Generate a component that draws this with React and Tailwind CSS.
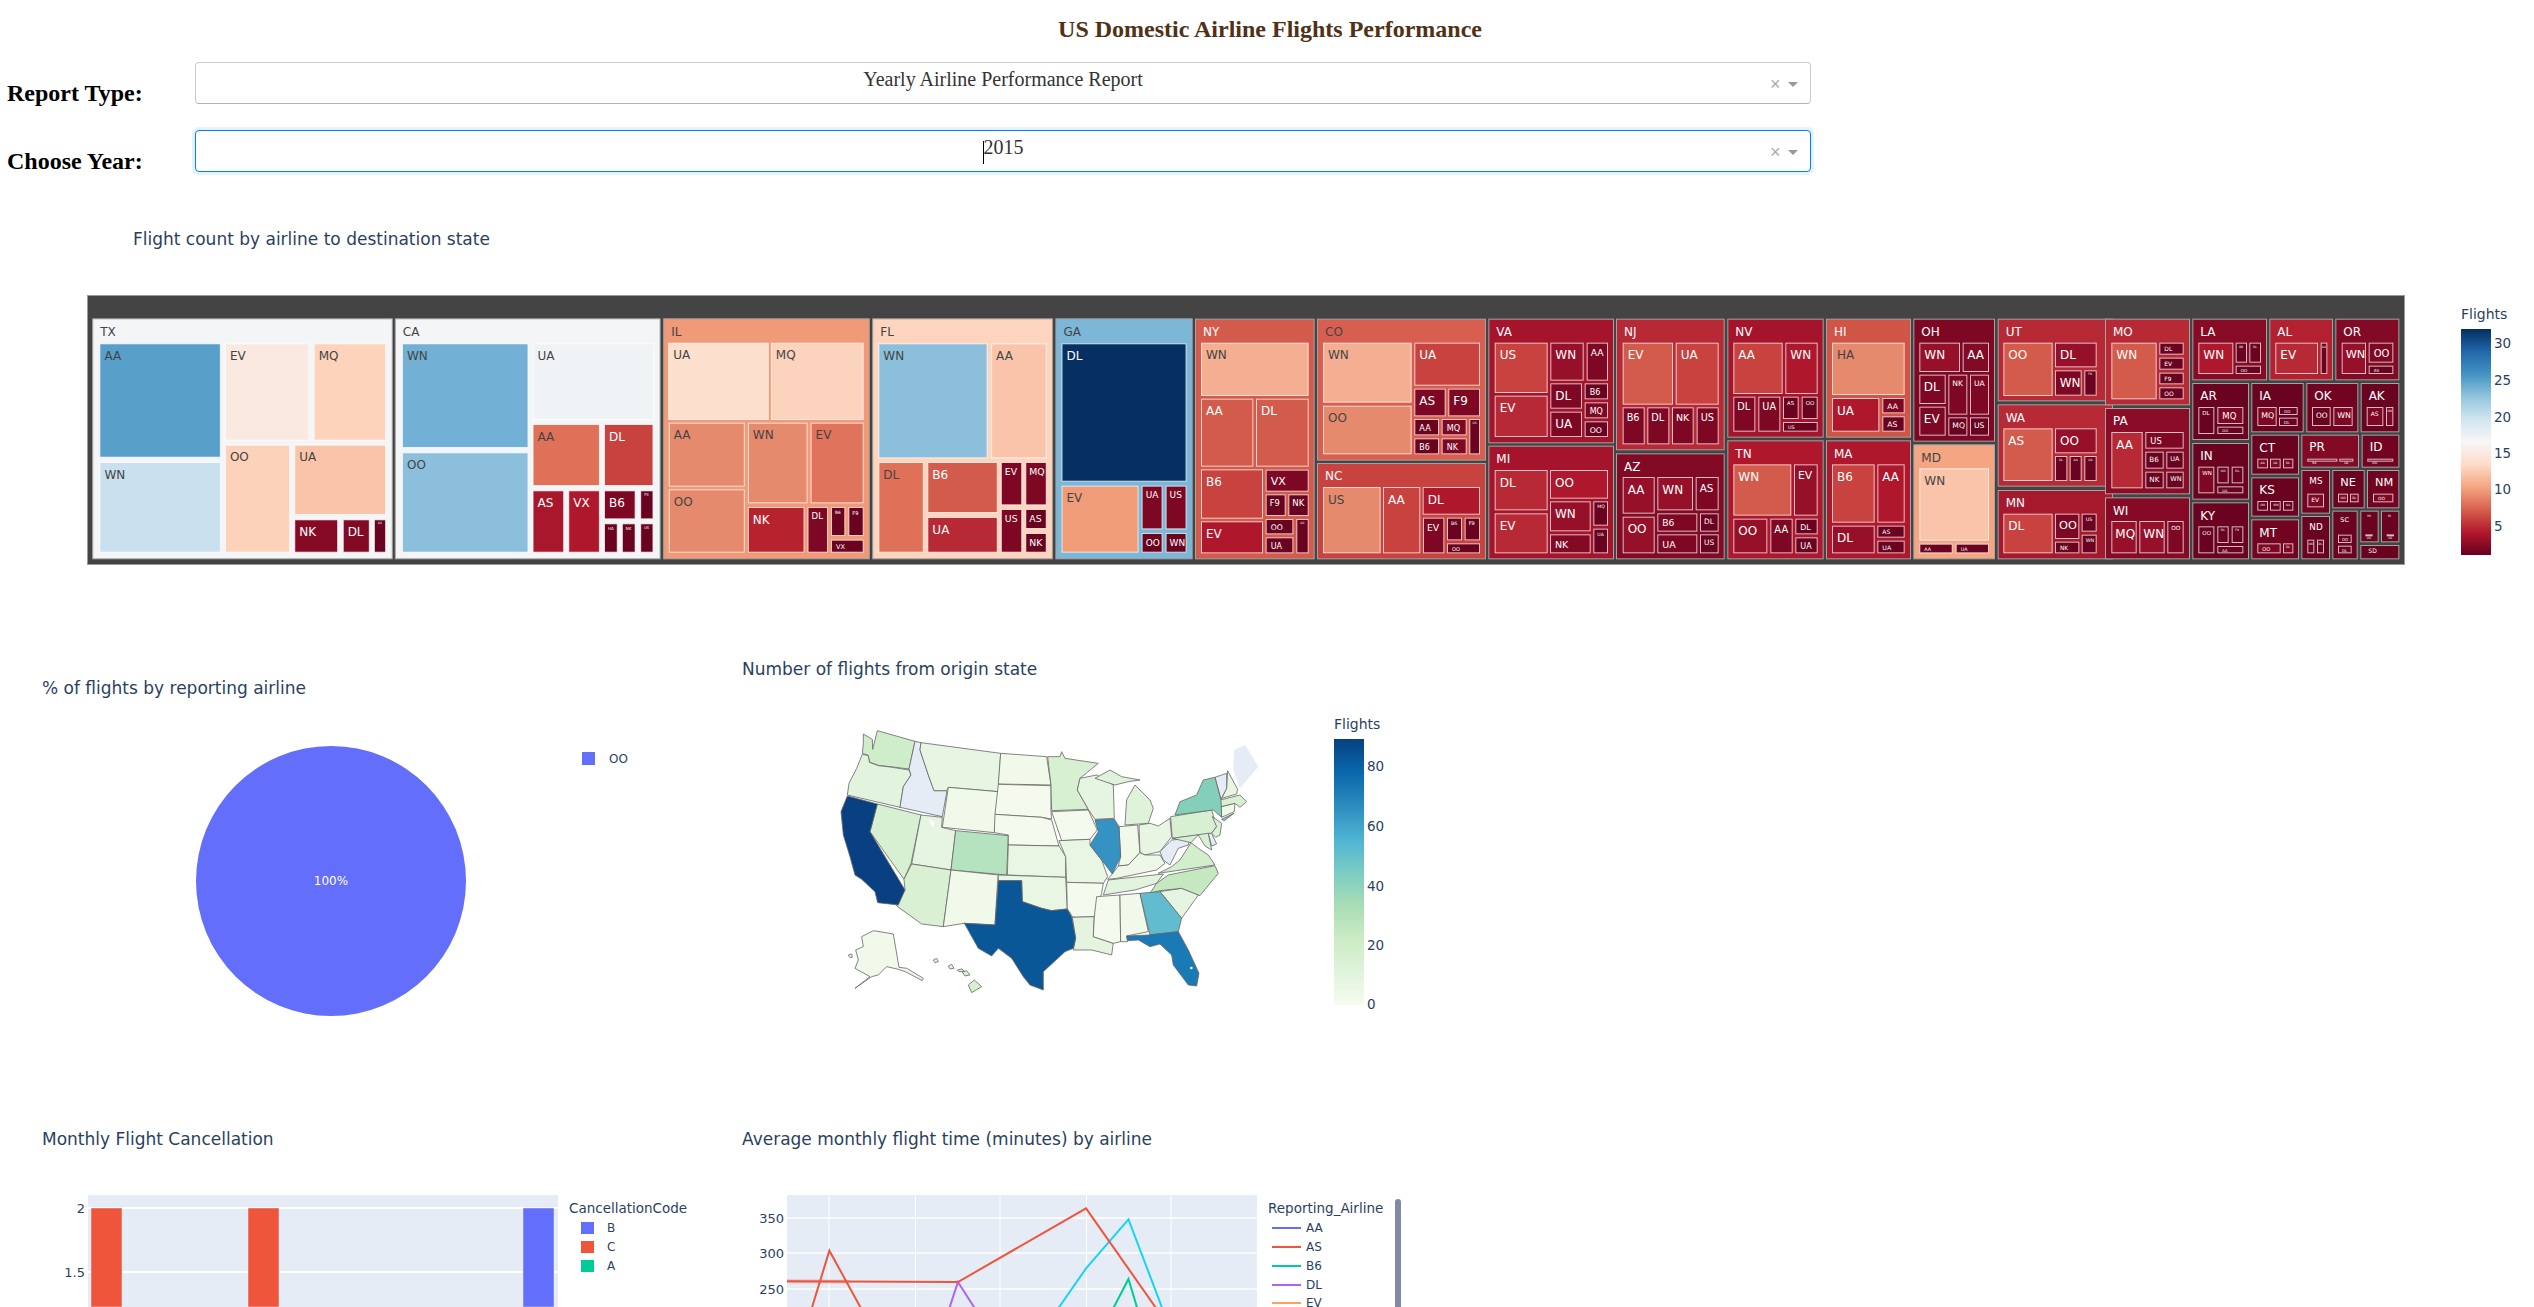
import React from 'react';

const C = '#2a3f5f';
const DK = '#6a0320';
const D2 = '#7e0823';
const D3 = '#96102a';
const R1 = '#ae172c';
const R2 = '#b72a35';
const R3 = '#c8423f';
const R4 = '#d35b4c';
const R5 = '#e68a6e';

// crops the boxes were measured on: x offset, x scale
const A = [80, 1.96];
const B = [860, 1.96];
const E8 = [1190, 3];
const E9 = [1620, 3];
const E10 = [2050, 3];

const box = (crop, oy, x0, x1, y0, y1) => ({
  x: crop[0] + x0 / crop[1],
  y: oy + y0 / 3,
  w: (x1 - x0) / crop[1],
  h: (y1 - y0) / 3,
});

// [label, crop, x0, x1, y0, y1, fill, children]
const states = [
  ['TX', A, 24, 613, 85, 808, '#f4f5f7', [
    ['AA', 38, 276, 160, 503, '#589fc9'], ['WN', 38, 276, 516, 788, '#c9e0ee'], ['EV', 284, 450, 160, 452, '#f9e9e0'],
    ['MQ', 458, 600, 160, 452, '#fdd3bc'], ['OO', 284, 412, 464, 788, '#fdd2bb'], ['UA', 420, 600, 464, 675, '#f9c4a9'],
    ['NK', 420, 506, 688, 788, '#870a24'], ['DL', 515, 568, 688, 788, '#820a24'], ['AS', 576, 600, 688, 788, DK],
  ]],
  ['CA', A, 617, 1138, 85, 808, '#f4f5f7', [
    ['WN', 631, 879, 160, 474, '#72b0d5'], ['OO', 631, 879, 487, 788, '#8bbfdc'], ['UA', 887, 1125, 160, 390, '#f0f3f6'],
    ['AA', 887, 1019, 402, 588, '#e07159'], ['DL', 1027, 1124, 402, 588, R3], ['AS', 887, 949, 601, 788, '#a9172c'],
    ['VX', 957, 1019, 601, 788, R1], ['B6', 1027, 1089, 601, 688, D2], ['F9', 1098, 1124, 601, 688, DK],
    ['HA', 1027, 1054, 700, 788, DK], ['NK', 1062, 1089, 700, 788, DK], ['US', 1098, 1124, 700, 788, DK],
  ]],
  ['IL', A, 1143, 1548, 85, 808, '#f09a78', [
    ['UA', 1153, 1350, 158, 390, '#fcdfcd'], ['MQ', 1354, 1536, 158, 390, '#fcd3bc'], ['AA', 1154, 1303, 398, 590, R5],
    ['OO', 1154, 1303, 598, 788, R5], ['WN', 1309, 1426, 398, 640, R5], ['EV', 1432, 1536, 398, 640, '#e0735b'],
    ['NK', 1309, 1420, 651, 788, '#b7222f'], ['DL', 1426, 1466, 651, 788, D2], ['B6', 1472, 1500, 651, 738, DK],
    ['F9', 1506, 1536, 651, 738, DK], ['VX', 1472, 1536, 749, 788, DK],
  ]],
  ['FL', B, 24, 378, 85, 808, '#fdd5bf', [
    ['WN', 36, 250, 160, 505, '#8bbfdc'], ['AA', 257, 366, 160, 505, '#f9c4a9'], ['DL', 36, 125, 516, 788, '#e07159'],
    ['B6', 132, 270, 516, 669, R4], ['UA', 132, 270, 681, 788, R2], ['EV', 276, 318, 516, 646, D2],
    ['MQ', 324, 366, 516, 646, D2], ['US', 276, 318, 657, 788, D2], ['AS', 324, 366, 657, 717, DK], ['NK', 324, 366, 729, 788, DK],
  ]],
  ['GA', B, 383, 652, 85, 808, '#7db7d8', [
    ['DL', 395, 640, 160, 575, '#053061'], ['EV', 395, 546, 587, 788, '#f19c79'], ['UA', 552, 593, 587, 718, D2],
    ['US', 599, 640, 587, 718, D2], ['OO', 552, 593, 729, 788, DK], ['WN', 599, 640, 729, 788, DK],
  ]],
  ['NY', E8, 15, 374, 56, 778, R4, [
    ['WN', 33, 356, 128, 288, '#f4ae91'], ['AA', 33, 190, 296, 500, R4], ['DL', 198, 356, 296, 500, R4],
    ['B6', 33, 219, 508, 656, R3], ['EV', 33, 219, 664, 760, R1], ['VX', 227, 356, 509, 575, D2],
    ['F9', 227, 287, 583, 648, DK], ['NK', 295, 356, 583, 648, DK], ['OO', 227, 310, 657, 703, DK],
    ['UA', 227, 310, 712, 760, DK], ['AS', 319, 356, 657, 760, DK],
  ]],
  ['CO', E8, 381, 888, 56, 482, '#d85f50', [
    ['WN', 399, 665, 128, 308, '#f4ae91'], ['OO', 399, 665, 317, 463, R5], ['UA', 673, 870, 128, 257, R3],
    ['AS', 673, 767, 266, 349, D2], ['F9', 775, 870, 266, 349, D2], ['AA', 673, 747, 357, 406, DK],
    ['MQ', 755, 830, 357, 406, D2], ['B6', 673, 747, 415, 463, DK], ['NK', 755, 830, 415, 463, D2], ['US', 838, 870, 357, 463, DK],
  ]],
  ['NC', E8, 381, 888, 489, 778, R3, [
    ['US', 399, 572, 561, 760, R5], ['AA', 579, 691, 561, 760, R3], ['DL', 698, 870, 561, 644, R1],
    ['EV', 699, 763, 653, 760, D2], ['B6', 771, 816, 653, 721, DK], ['F9', 824, 870, 653, 721, DK], ['OO', 771, 870, 730, 760, DK],
  ]],
  ['VA', E8, 895, 1272, 56, 430, '#a6142b', [
    ['US', 914, 1073, 128, 279, R3], ['EV', 914, 1073, 287, 411, R2], ['WN', 1081, 1181, 128, 242, D3],
    ['AA', 1190, 1254, 128, 242, D2], ['DL', 1081, 1176, 250, 326, D2], ['UA', 1081, 1176, 335, 411, D2],
    ['B6', 1184, 1254, 250, 298, DK], ['MQ', 1184, 1254, 307, 355, D2], ['OO', 1184, 1254, 364, 411, DK],
  ]],
  ['MI', E8, 895, 1272, 437, 778, '#a6142b', [
    ['DL', 914, 1073, 510, 631, R2], ['EV', 914, 1073, 640, 760, R2], ['OO', 1080, 1254, 510, 596, R1],
    ['WN', 1080, 1202, 604, 694, D3], ['NK', 1080, 1202, 703, 760, '#820a24'], ['MQ', 1210, 1254, 604, 677, DK], ['UA', 1210, 1254, 686, 760, DK],
  ]],
  ['NJ', E9, -12, 314, 56, 451, R2, [
    ['EV', 8, 159, 128, 314, R4], ['UA', 167, 296, 128, 314, R3], ['B6', 8, 74, 322, 433, D2],
    ['DL', 82, 148, 322, 433, D2], ['NK', 156, 221, 322, 433, D2], ['US', 230, 296, 322, 433, D2],
  ]],
  ['AZ', E9, -12, 314, 460, 778, '#820a24', [
    ['AA', 8, 104, 531, 641, D3], ['OO', 8, 104, 650, 760, D3], ['WN', 112, 219, 531, 631, D3], ['AS', 227, 296, 531, 631, D2],
    ['B6', 112, 232, 640, 695, D2], ['UA', 112, 232, 703, 760, D2], ['DL', 240, 296, 640, 695, DK], ['US', 240, 296, 703, 760, DK],
  ]],
  ['NV', E9, 322, 611, 56, 413, '#a6142b', [
    ['AA', 340, 488, 128, 282, R3], ['WN', 496, 593, 128, 282, R1], ['DL', 340, 406, 290, 395, D2], ['UA', 415, 481, 290, 395, D2],
    ['AS', 489, 536, 290, 357, DK], ['OO', 545, 593, 290, 357, DK], ['US', 489, 593, 366, 395, DK],
  ]],
  ['TN', E9, 322, 611, 421, 778, R1, [
    ['WN', 340, 514, 493, 647, R4], ['EV', 522, 593, 493, 647, D3], ['OO', 340, 442, 656, 760, D3],
    ['AA', 451, 518, 656, 760, D2], ['DL', 526, 593, 656, 703, DK], ['UA', 526, 593, 712, 760, DK],
  ]],
  ['HI', E9, 618, 873, 56, 413, '#d05546', [
    ['HA', 636, 854, 128, 285, R5], ['UA', 636, 778, 294, 395, R1], ['AA', 787, 854, 294, 340, D2], ['AS', 787, 854, 349, 395, DK],
  ]],
  ['MA', E9, 618, 873, 421, 778, R1, [
    ['B6', 636, 764, 493, 668, R3], ['AA', 772, 854, 493, 668, R1], ['DL', 636, 764, 677, 760, D3],
    ['AS', 772, 854, 677, 713, DK], ['UA', 772, 854, 722, 760, DK],
  ]],
  ['OH', E9, 880, 1125, 56, 425, D2, [
    ['WN', 898, 1020, 128, 216, D3], ['AA', 1028, 1107, 128, 216, '#820a24'], ['DL', 898, 977, 224, 312, D2], ['EV', 898, 977, 320, 407, D2],
    ['NK', 985, 1042, 224, 344, D2], ['UA', 1050, 1107, 224, 344, D2], ['MQ', 985, 1042, 352, 407, DK], ['US', 1050, 1107, 352, 407, DK],
  ]],
  ['MD', E9, 880, 1125, 433, 778, '#f4a582', [
    ['WN', 898, 1107, 505, 722, '#f9c4a9'], ['AA', 898, 998, 731, 760, DK], ['UA', 1007, 1107, 731, 760, DK],
  ]],
  ['UT', E9, 1133, 1479, 56, 304, R2, [
    ['OO', 1150, 1298, 128, 288, R4], ['DL', 1305, 1430, 128, 202, D3], ['WN', 1305, 1385, 211, 287, D2], ['F9', 1393, 1430, 211, 287, DK],
  ]],
  ['WA', E9, 1133, 1479, 313, 560, R2, [
    ['AS', 1150, 1298, 385, 543, R4], ['OO', 1305, 1430, 385, 460, D3], ['DL', 1305, 1342, 468, 543, DK],
    ['AA', 1349, 1385, 468, 543, DK], ['UA', 1393, 1430, 468, 543, DK],
  ]],
  ['MN', E9, 1133, 1479, 570, 778, '#a6182b', [
    ['DL', 1150, 1298, 641, 760, R3], ['OO', 1305, 1378, 641, 717, D2], ['NK', 1305, 1378, 725, 760, DK],
    ['US', 1385, 1430, 641, 695, DK], ['WN', 1385, 1430, 704, 760, DK],
  ]],
  ['MO', E10, 165, 420, 56, 316, R2, [
    ['WN', 184, 320, 128, 298, R4], ['DL', 328, 401, 128, 164, DK], ['EV', 328, 401, 173, 209, DK],
    ['F9', 328, 401, 218, 253, DK], ['OO', 328, 401, 262, 298, DK],
  ]],
  ['PA', E10, 165, 420, 324, 583, '#8b0c26', [
    ['AA', 184, 278, 396, 565, R2], ['US', 286, 401, 396, 446, D2], ['B6', 286, 341, 455, 506, DK],
    ['UA', 349, 401, 455, 506, DK], ['NK', 286, 341, 515, 565, DK], ['WN', 349, 401, 515, 565, DK],
  ]],
  ['WI', E10, 165, 420, 592, 778, '#860a25', [
    ['MQ', 184, 260, 663, 760, D3], ['WN', 268, 344, 663, 760, D3], ['OO', 352, 401, 663, 760, D2],
  ]],
  ['LA', E10, 427, 651, 56, 241, '#870b25', [
    ['WN', 445, 550, 128, 222, R1], ['B6', 557, 591, 128, 188, DK], ['DL', 598, 633, 128, 188, DK], ['OO', 557, 633, 197, 222, DK],
  ]],
  ['AL', E10, 658, 849, 56, 241, '#b3202f', [['EV', 676, 804, 128, 222, R2], ['AA', 812, 832, 128, 222, DK]]],
  ['OR', E10, 856, 1048, 56, 241, '#820a24', [
    ['WN', 875, 948, 128, 222, D3], ['OO', 956, 1030, 128, 188, D2], ['AS', 956, 1030, 197, 222, DK],
  ]],
  ['AR', E10, 427, 597, 249, 420, DK, [['DL', 445, 493, 321, 402, DK], ['MQ', 502, 580, 321, 372, D2], ['OO', 502, 580, 380, 402, DK]]],
  ['IN', E10, 427, 597, 429, 599, DK, [
    ['WN', 445, 493, 500, 580, D2], ['OO', 502, 536, 500, 550, DK], ['DL', 545, 580, 500, 550, DK], ['UA', 502, 580, 559, 580, DK],
  ]],
  ['KY', E10, 427, 597, 607, 778, DK, [
    ['OO', 445, 493, 679, 760, DK], ['DL', 502, 536, 679, 729, DK], ['F9', 545, 580, 679, 729, DK], ['AA', 502, 580, 738, 760, DK],
  ]],
  ['IA', E10, 604, 761, 249, 397, DK, [['MQ', 622, 680, 321, 378, D2], ['OO', 687, 743, 321, 345, DK], ['DL', 687, 743, 353, 378, DK]]],
  ['OK', E10, 769, 925, 249, 397, '#720421', [['OO', 786, 842, 321, 378, DK], ['WN', 850, 908, 321, 378, D2]]],
  ['AK', E10, 932, 1048, 249, 397, DK, [['AS', 950, 1000, 321, 378, D2], ['OO', 1008, 1030, 321, 378, D2]]],
  ['CT', E10, 604, 747, 404, 524, DK, [['AA', 622, 654, 476, 505, D2], ['UA', 660, 692, 476, 505, D2], ['DL', 699, 730, 476, 505, D2]]],
  ['KS', E10, 604, 747, 532, 650, DK, [['OO', 622, 654, 603, 632, DK], ['WN', 660, 692, 603, 632, DK], ['AA', 699, 730, 603, 632, DK]]],
  ['MT', E10, 604, 747, 658, 778, '#720421', [['OO', 622, 692, 730, 760, D2], ['DL', 699, 730, 730, 760, D2]]],
  ['PR', E10, 754, 927, 404, 503, '#820a24', [['B6', 772, 862, 476, 485, D2], ['UA', 868, 910, 476, 485, D2]]],
  ['ID', E10, 935, 1048, 404, 503, '#720421', [['OO', 952, 1030, 476, 485, D2]]],
  ['MS', E10, 754, 840, 510, 641, '#720421', [['EV', 772, 822, 581, 622, D2]]],
  ['ND', E10, 754, 840, 648, 778, DK, [['OO', 772, 793, 719, 760, DK], ['DL', 801, 822, 719, 760, DK]]],
  ['NE', E10, 847, 944, 510, 625, DK, [['OO', 864, 894, 581, 607, D2], ['DL', 900, 926, 581, 607, D2]]],
  ['NM', E10, 951, 1048, 510, 625, '#720421', [['OO', 969, 1030, 581, 607, D2]]],
  ['SC', E10, 847, 923, 632, 778, DK, [['OO', 864, 905, 704, 729, DK], ['DL', 864, 905, 737, 760, DK]]],
  ['MI', E10, 931, 986, 632, 727, DK, [['US', 946, 968, 703, 709, D2]]],
  ['RI', E10, 993, 1048, 632, 727, DK, [['US', 1010, 1032, 703, 709, D2]]],
  ['SD', E10, 931, 1048, 735, 778, DK, []],
];

const luma = (hex) => {
  const n = parseInt(hex.slice(1), 16);
  return 0.299 * (n >> 16) + 0.587 * ((n >> 8) & 255) + 0.114 * (n & 255);
};

// small text is shrunk to fit its cell, the way the chart lib does
function Cell({ label, r, fill, parent }) {
  const tw1 = label.length * 0.72;
  const fs = parent
    ? Math.max(3, Math.min(12, (r.w - 16) / tw1, r.h * 0.42))
    : Math.max(3, Math.min(12, (r.w - 8) / tw1, r.h * 0.5));
  const tw = tw1 * fs;
  const tx = parent ? Math.min(8, (r.w - tw) / 2) : Math.min(5, (r.w - tw) / 2);
  const ty = parent ? fs * 1.1 + Math.min(4, r.h * 0.1) : fs * 1.3 + 1;
  return (
    <g>
      <rect
        x={r.x + 0.5}
        y={r.y + 0.5}
        width={r.w - 1}
        height={r.h - 1}
        fill={fill}
        stroke={parent ? '#a3a3a3' : '#ffffff'}
        strokeOpacity={parent ? 1 : 0.72}
      />
      <text x={r.x + tx} y={r.y + ty} fontSize={fs} fill={luma(fill) > 127 ? '#444444' : '#ffffff'}>{label}</text>
    </g>
  );
}

function Treemap() {
  return (
    <svg viewBox="0 200 2534 420" className="block w-[2534px] h-[420px] font-['DejaVu_Sans',sans-serif]">
      <defs>
        <linearGradient id="rdbu" x1="0" y1="0" x2="0" y2="1">
          {['#053061', '#2166ac', '#4393c3', '#92c5de', '#d1e5f0', '#f7f7f7', '#fddbc7', '#f4a582', '#d6604d', '#b2182b', '#67001f'].map((c, i) => (
            <stop key={c} offset={i / 10} stopColor={c} />
          ))}
        </linearGradient>
      </defs>
      <text x="133" y="245" fontSize="17" fill={C}>Flight count by airline to destination state</text>
      <rect x="87.5" y="295.5" width="2317" height="269" fill="#444444" stroke="#999999" />
      {states.map(([label, crop, x0, x1, y0, y1, fill, kids]) => {
        const oy = crop === A || crop === B ? 290 : 300;
        return (
          <g key={label + x0 + y0}>
            <Cell parent label={label} fill={fill} r={box(crop, oy, x0, x1, y0, y1)} />
            {kids.map(([l, a, b, c, d, f]) => (
              <Cell key={l + a + c} label={l} fill={f} r={box(crop, oy, a, b, c, d)} />
            ))}
          </g>
        );
      })}
      <text x="2461" y="319" fontSize="14" fill={C}>Flights</text>
      <rect x="2461" y="329" width="30" height="226" fill="url(#rdbu)" />
      {[[30, 343], [25, 380], [20, 417], [15, 453], [10, 489], [5, 526]].map(([v, y]) => (
        <text key={v} x="2494" y={y + 5} fontSize="13.5" fill={C}>{v}</text>
      ))}
    </svg>
  );
}

const usa = [
  ['#d0edca', '85,42 112,58 113,88 127,32 240,64 222,147 165,140 130,136 103,126 100,106 82,100 85,70'],
  ['#e2f4de', '82,103 100,107 103,127 130,137 165,141 222,150 228,165 205,200 195,262 37,225 42,190 65,145'],
  ['#d8f0d2', '127,252 258,285 228,430 207,478 105,335'],
  ['#e5ecf6', '240,64 258,68 255,90 280,165 297,212 336,212 322,290 195,262 205,200 228,165 222,147'],
  ['#e8f5e2', '258,68 497,100 490,215 340,202 335,212 297,212 280,165 255,90'],
  ['#f1f9ea', '340,202 490,215 478,338 322,322'],
  ['#e6f5e1', '258,285 322,292 320,322 362,332 348,450 230,432'],
  ['#b5e3bf', '362,332 520,347 515,465 348,450'],
  ['#d9f0d3', '230,432 348,450 325,620 260,612 185,558 192,535 210,510 207,478'],
  ['#f1f9ea', '348,450 490,465 488,482 480,615 388,610 325,620'],
  ['#f1f9ea', '497,100 635,110 648,195 490,192'],
  ['#f4faee', '490,193 648,197 648,275 650,297 620,292 480,283'],
  ['#f4faee', '480,283 620,292 650,300 672,378 520,375 520,345 478,338'],
  ['#e9f6e3', '520,375 672,378 692,410 692,472 517,465'],
  ['#eaf6e4', '490,465 692,472 697,567 650,572 620,565 562,545 560,482 490,482'],
  ['#d8f0d2', '638,110 675,110 680,95 690,115 790,130 735,175 727,210 760,268 650,272 648,195'],
  ['#f4faee', '650,275 760,270 787,330 765,358 680,362'],
  ['#eaf6e4', '672,362 765,358 765,375 800,420 818,470 805,490 695,487 692,410'],
  ['#f4faee', '695,487 805,490 800,520 778,590 720,592 712,590 697,567'],
  ['#e4f4df', '712,592 778,590 775,650 835,670 830,705 770,690 715,690 722,655'],
  ['#e6f5e1', '735,175 785,165 835,195 838,295 780,298 760,268 727,210'],
  ['#f1f9ea', '852,320 908,315 915,398 880,435 850,438 857,410'],
  ['#dff3da', '870,315 875,240 900,195 930,225 945,240 955,265 940,310'],
  ['#dff3da', '780,175 825,150 860,170 915,180 880,185 840,195'],
  ['#e8f5e2', '912,315 945,310 970,318 1005,295 1010,350 975,395 930,405 915,398'],
  ['#eef8e8', '832,462 850,438 880,435 915,398 930,405 975,405 990,430 965,450 845,475 818,478'],
  ['#e2f4de', '820,480 985,462 965,490 900,510 805,525'],
  ['#f4faee', '785,530 855,525 857,665 835,670 775,650 778,590'],
  ['#f1f9ea', '855,525 915,520 940,635 875,648 878,665 857,665'],
  ['#e6f5e1', '975,515 1040,505 1090,525 1040,595'],
  ['#c5e8c0', '965,490 1000,465 1140,437 1150,460 1095,527 1040,505 975,512 945,520'],
  ['#d2eecd', '970,460 1010,440 1035,420 1068,368 1090,385 1120,405 1140,435'],
  ['#e5ecf6', '975,395 1005,365 1010,360 1065,355 1060,375 1030,385 1005,435 985,420'],
  ['#d8f0d2', '1007,290 1130,270 1145,320 1130,340 1012,355'],
  ['#dcf2d6', '1132,290 1160,310 1155,345 1142,352 1130,340 1145,320'],
  ['#d8f0d2', '1012,355 1120,340 1130,390 1110,378 1090,345 1068,368'],
  ['#e5ecf6', '1120,340 1130,340 1145,372 1130,378'],
  ['#eff8e9', '1158,260 1200,250 1198,275 1160,292'],
  ['#d8f0d2', '1156,240 1215,225 1235,245 1215,262 1200,250 1158,260'],
  ['#eaf6e4', '1178,152 1208,208 1205,222 1160,235 1175,205'],
  ['#e5ecf6', '1140,172 1175,160 1175,205 1158,238'],
  ['#f1f9ea', '115,632 175,642 192,742 215,745 265,775 262,782 215,757 190,748 155,740 130,765 110,770 60,805 105,770 60,745 70,720 62,690 85,680 80,650'],
  ['#f1f9ea', '40,705 50,702 52,712 44,712'],
  ['#e6f5e1', '295,720 305,715 310,725 300,728'],
  ['#e2f4de', '340,738 350,733 357,745 345,747'],
  ['#d8f0d2', '367,750 380,747 390,755 372,755'],
  ['#d8f0d2', '382,756 395,752 405,765 390,768'],
  ['#d8f0d2', '400,795 418,780 440,800 410,818'],
  ['#84cfb9', '1020,285 1035,245 1085,225 1105,180 1140,172 1158,240 1160,292 1135,270'],
  ['#84cfb9', '1160,298 1197,280 1168,302'],
  ['#3493c3', '780,300 838,297 852,320 857,410 832,462 800,420 765,375 790,335'],
  ['#62bccf', '915,520 975,515 1040,595 1030,635 945,645'],
  ['#197ab6', '875,648 940,645 1030,635 1060,690 1092,760 1085,798 1060,795 1015,735 1010,705 975,672 945,680 910,660 878,662'],
  ['#0a5798', '490,482 560,482 562,545 620,565 650,572 697,567 710,590 722,655 715,685 690,695 625,755 625,810 585,795 565,770 530,715 490,685 470,708 430,685 388,610 480,615'],
  ['#084081', '37,228 127,252 105,335 210,510 190,555 128,548 120,515 80,478 60,465 45,410 25,345 18,275'],
];

function PieChart() {
  return (
    <svg viewBox="0 640 720 400" className="block w-[720px] h-[400px] font-['DejaVu_Sans',sans-serif]">
      <text x="42" y="694" fontSize="17" fill={C}>% of flights by reporting airline</text>
      <circle cx="331" cy="881" r="135" fill="#636efa" />
      <text x="331" y="885" fontSize="12" fill="#ffffff" textAnchor="middle">100%</text>
      <rect x="582" y="752" width="13" height="13" fill="#636efa" />
      <text x="609" y="763" fontSize="12" fill={C}>OO</text>
    </svg>
  );
}

function MapChart() {
  return (
    <svg viewBox="720 640 720 400" className="block w-[720px] h-[400px] font-['DejaVu_Sans',sans-serif]">
      <defs>
        <linearGradient id="gnbu" x1="0" y1="1" x2="0" y2="0">
          {['#f7fcf0', '#e0f3db', '#ccebc5', '#a8ddb5', '#7bccc4', '#4eb3d3', '#2b8cbe', '#0868ac', '#084081'].map((c, i) => (
            <stop key={c} offset={i / 8} stopColor={c} />
          ))}
        </linearGradient>
      </defs>
      <text x="742" y="675" fontSize="17" fill={C}>Number of flights from origin state</text>
      <g transform="translate(835 720) scale(0.3333)">
        <polygon points="1197,90 1230,75 1270,140 1215,205 1195,150" fill="#e5ecf6" />
        {usa.map(([fill, points]) => (
          <polygon key={points} points={points} fill={fill} stroke="#666666" strokeWidth="2.4" strokeLinejoin="round" />
        ))}
        <polygon points="283,298 296,305 297,322 287,316" fill="#ffffff" />
        <circle cx="1069" cy="744" r="4" fill="#ffffff" />
      </g>
      <text x="1334" y="729" fontSize="14" fill={C}>Flights</text>
      <rect x="1334" y="739" width="30" height="266" fill="url(#gnbu)" />
      {[[80, 766], [60, 826], [40, 886], [20, 945], [0, 1004]].map(([v, y]) => (
        <text key={v} x="1367" y={y + 5} fontSize="13.5" fill={C}>{v}</text>
      ))}
    </svg>
  );
}

function BarChart() {
  return (
    <svg viewBox="0 1100 720 207" className="block w-[720px] h-[207px] font-['DejaVu_Sans',sans-serif]">
      <text x="42" y="1145" fontSize="17" fill={C}>Monthly Flight Cancellation</text>
      <rect x="88" y="1195" width="470" height="112" fill="#e5ecf6" />
      <line x1="88" x2="558" y1="1208" y2="1208" stroke="#ffffff" strokeWidth="2" />
      <line x1="88" x2="558" y1="1272" y2="1272" stroke="#ffffff" strokeWidth="2" />
      <g stroke="#e5ecf6" strokeWidth="0.5">
        <rect x="91" y="1208" width="31" height="99" fill="#ef553b" />
        <rect x="248" y="1208" width="31" height="99" fill="#ef553b" />
        <rect x="523" y="1208" width="31" height="99" fill="#636efa" />
      </g>
      <text x="85" y="1213" fontSize="13" fill={C} textAnchor="end">2</text>
      <text x="85" y="1277" fontSize="13" fill={C} textAnchor="end">1.5</text>
      <text x="569" y="1213" fontSize="13.5" fill={C}>CancellationCode</text>
      {[['B', 1228, '#636efa'], ['C', 1247, '#ef553b'], ['A', 1266, '#00cc96']].map(([l, y, c]) => (
        <g key={l}>
          <rect x="581" y={y - 6} width="13" height="12" fill={c} />
          <text x="607" y={y + 4} fontSize="12" fill={C}>{l}</text>
        </g>
      ))}
    </svg>
  );
}

function LineChart() {
  const px = (X) => X / 2.24 + 720;
  const py = (Y) => Y / 3 + 1180;
  const line = (pts) => pts.map(([x, y]) => `${px(x)},${py(y)}`).join(' ');
  return (
    <svg viewBox="720 1100 720 207" className="block w-[720px] h-[207px] font-['DejaVu_Sans',sans-serif]">
      <text x="742" y="1145" fontSize="17" fill={C}>Average monthly flight time (minutes) by airline</text>
      <rect x="787" y="1195" width="470" height="112" fill="#e5ecf6" />
      {[829, 915.5, 1000, 1086.5, 1171].map((x) => (
        <line key={x} x1={x} x2={x} y1="1195" y2="1307" stroke="#ffffff" />
      ))}
      {[[350, 1218], [300, 1253], [250, 1289]].map(([v, y]) => (
        <g key={v}>
          <line x1="787" x2="1257" y1={y} y2={y} stroke="#ffffff" strokeWidth="1.5" />
          <text x="784" y={y + 5} fontSize="13" fill={C} textAnchor="end">{v}</text>
        </g>
      ))}
      <g fill="none" strokeWidth="2">
        <polyline stroke="#ab63fa" points={line([[510, 400], [533, 306], [578, 400]])} />
        <polyline stroke="#19d3f3" points={line([[750, 400], [820, 265], [915, 118], [995, 400]])} />
        <polyline stroke="#00cc96" points={line([[875, 400], [915, 297], [938, 400]])} />
        <polyline stroke="#ef553b" points={line([[202, 400], [245, 212], [322, 400]])} />
        <polyline stroke="#ef553b" strokeOpacity="0.3" strokeWidth="4" points={line([[150, 304], [290, 305]])} />
        <polyline stroke="#ef553b" points={line([[150, 304], [533, 306], [820, 85], [985, 400]])} />
      </g>
      <text x="1268" y="1213" fontSize="13.5" fill={C}>Reporting_Airline</text>
      {[['AA', 1228, '#636efa'], ['AS', 1247, '#ef553b'], ['B6', 1266, '#00cc96'], ['DL', 1285, '#ab63fa'], ['EV', 1303, '#ffa15a']].map(([l, y, c]) => (
        <g key={l}>
          <line x1="1272" x2="1301" y1={y} y2={y} stroke={c} strokeWidth="2" />
          <text x="1306" y={y + 4} fontSize="12" fill={C}>{l}</text>
        </g>
      ))}
      <rect x="1395" y="1199" width="6" height="120" rx="3" fill="#808ba3" />
    </svg>
  );
}

function Dropdown({ value, focused }) {
  return (
    <div
      className={
        focused
          ? 'flex w-[1616px] h-[42px] rounded border border-[#007eff] bg-white shadow-[0_0_0_3px_#e5f2ff]'
          : 'flex w-[1616px] h-[42px] rounded border border-[#cccccc] border-b-[#b3b3b3] bg-white'
      }
    >
      <div className="flex-1 flex justify-center items-start pl-[40px] pt-px text-[20px] leading-[30px] text-[#333333]">
        {focused && <span className="block w-px h-[23px] mt-[9px] bg-black" />}
        <span>{value}</span>
      </div>
      <div className="w-[40px] flex items-center gap-[7px] pt-[2px] text-[#aaaaaa]">
        <span className="text-[18px] leading-none font-['Liberation_Sans',sans-serif]">×</span>
        <span className="block border-x-[5px] border-t-[5px] border-x-transparent border-t-[#999999]" />
      </div>
    </div>
  );
}

export default function App() {
  return (
    <div className="w-[2534px] h-[1307px] overflow-hidden bg-white font-['Liberation_Serif',serif]">
      <div className="h-[200px]">
        <h1 className="pt-[14px] pl-[6px] text-center text-[24px] leading-[30px] font-bold text-[#503217]">US Domestic Airline Flights Performance</h1>
        <div className="flex items-start mt-[18px]">
          <label className="w-[195px] pl-[7px] pt-[16px] text-[24px] leading-[30px] font-bold text-black">Report Type:</label>
          <Dropdown value="Yearly Airline Performance Report" />
        </div>
        <div className="flex items-start mt-[22px]">
          <label className="w-[195px] pl-[7px] pt-[16px] text-[24px] leading-[30px] font-bold text-black">Choose Year:</label>
          <Dropdown value="2015" focused />
        </div>
      </div>
      <Treemap />
      <div className="flex mt-[20px]">
        <PieChart />
        <MapChart />
      </div>
      <div className="flex mt-[60px]">
        <BarChart />
        <LineChart />
      </div>
    </div>
  );
}
